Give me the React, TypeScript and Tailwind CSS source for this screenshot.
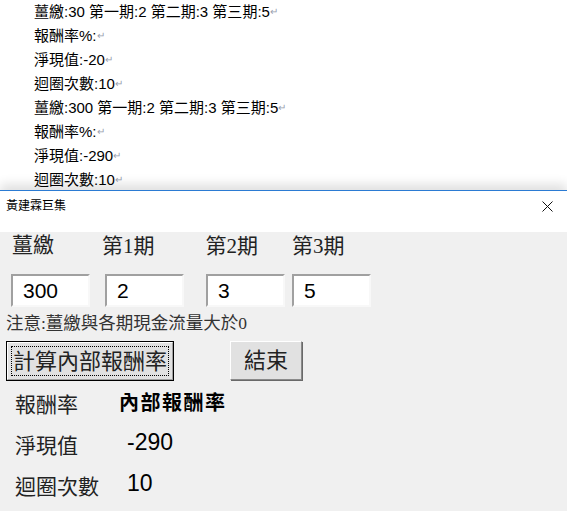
const docLines = [
  "薑繳:30 第一期:2 第二期:3 第三期:5",
  "報酬率%:",
  "淨現值:-20",
  "迴圈次數:10",
  "薑繳:300 第一期:2 第二期:3 第三期:5",
  "報酬率%:",
  "淨現值:-290",
  "迴圈次數:10",
];

const serif = "font-['Liberation_Serif','Noto_Sans_CJK_TC',serif]";
const sans = "font-['Liberation_Sans','Noto_Sans_CJK_TC',sans-serif]";

const fields = [
  { value: "300", ml: "ml-[11px]" },
  { value: "2", ml: "ml-[15px]" },
  { value: "3", ml: "ml-[22px]" },
  { value: "5", ml: "ml-[7px]" },
];

export default function App() {
  return (
    <div className="w-[567px] h-[511px] overflow-hidden bg-white">
      <div className={`h-[190px] overflow-hidden pl-[34px] text-[15px] text-black ${sans}`}>
        {docLines.map((line, i) => (
          <div key={i} className="flex h-[24px] items-center whitespace-pre">
            {line}
            <span className="text-[10px] leading-none text-gray-400">↵</span>
          </div>
        ))}
      </div>

      <div className="relative h-[321px] border-t border-[#2b7bd3] shadow-[0_-6px_10px_rgba(0,0,0,0.12)]">
        <div className="flex h-[30px] items-center justify-between bg-white pl-[6px] pr-[14px]">
          <span className={`text-[12px] text-black ${sans}`}>黃建霖巨集</span>
          <svg width="11" height="11" viewBox="0 0 11 11">
            <path d="M0.5 0.5 L10.5 10.5 M10.5 0.5 L0.5 10.5" stroke="#111" strokeWidth="1" />
          </svg>
        </div>

        <div className={`h-[290px] bg-[#f0f0f0] text-[#222] ${serif}`}>
          <div className="flex h-[28px] mt-[11px] items-center text-[21px] leading-[28px]">
            <span className="ml-[12px] -mt-[3px]">薑繳</span>
            <span className="ml-[48px]">第1期</span>
            <span className="ml-[51px]">第2期</span>
            <span className="ml-[34px]">第3期</span>
          </div>

          <div className="flex mt-[14px]">
            {fields.map((f) => (
              <div
                key={f.value}
                className={`${f.ml} flex h-[33px] w-[79px] items-center border-2 border-t-[#a0a0a0] border-l-[#a0a0a0] border-b-[#f8f8f8] border-r-[#f8f8f8] bg-white pl-[10px] text-[21px] text-black ${sans}`}
              >
                {f.value}
              </div>
            ))}
          </div>

          <div className="mt-[6px] ml-[6px] text-[17.5px] leading-[21px] text-[#333]">
            注意:薑繳與各期現金流量大於0
          </div>

          <div className="mt-[7px] flex">
            <div className="ml-[6px] h-[40px] w-[168px] border border-black">
              <div className="h-full w-full border border-t-white border-l-white border-b-[#a0a0a0] border-r-[#a0a0a0] bg-[#e1e1e1] p-[3px]">
                <div className="flex h-full w-full items-center justify-center border border-dotted border-black text-[22px] text-[#222]">
                  計算內部報酬率
                </div>
              </div>
            </div>
            <div className="ml-[56px] flex h-[39px] w-[72px] items-center justify-center border border-t-white border-l-white border-b-[#8a8a8a] border-r-[#8a8a8a] bg-[#e1e1e1] shadow-[1px_1px_0_#696969] text-[22px] text-[#222]">
              結束
            </div>
          </div>

          <div className="mt-[4px] grid grid-cols-[119px_1fr] auto-rows-[41px]">
            <div className="flex items-center pl-[15px] text-[21px]">報酬率</div>
            <div className={`flex items-center pb-[5px] text-[20px] font-bold tracking-[1.5px] text-black ${sans}`}>內部報酬率</div>
            <div className="flex items-center pl-[15px] text-[21px]">淨現值</div>
            <div className={`flex items-center pb-[9px] pl-[8px] text-[23px] text-black ${sans}`}>-290</div>
            <div className="flex items-center pl-[15px] text-[21px]">迴圈次數</div>
            <div className={`flex items-center pb-[9px] pl-[8px] text-[23px] text-black ${sans}`}>10</div>
          </div>
        </div>
      </div>
    </div>
  );
}
